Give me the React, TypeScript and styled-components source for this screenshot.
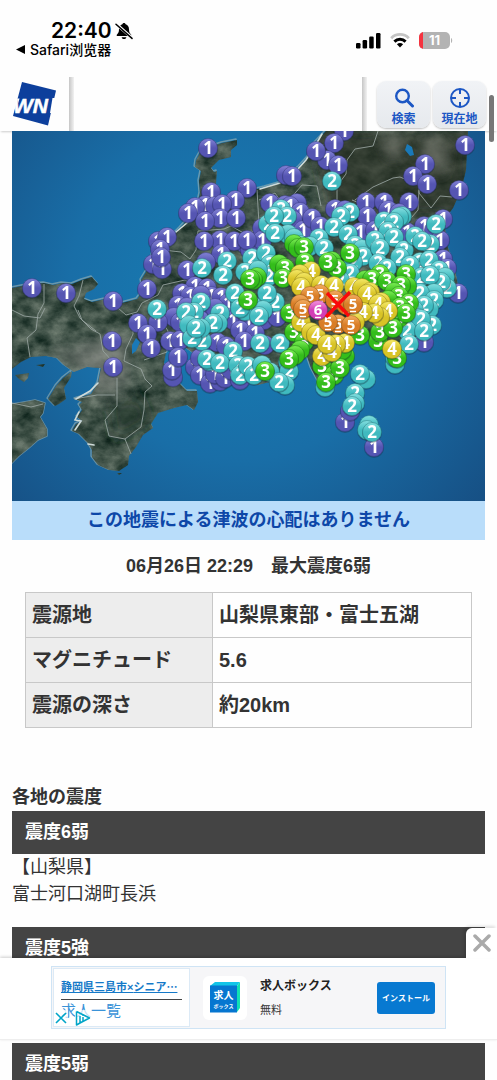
import React from 'react';
import styled, { createGlobalStyle } from 'styled-components';

const GlobalStyle = createGlobalStyle`
  * { box-sizing: border-box; }
  body {
    margin: 0;
    background: #fefefe;
    color: #333;
    font-family: "Liberation Sans", "Noto Sans CJK JP", sans-serif;
  }
  h1, h2, h3, p { margin: 0; }
`;

const Screen = styled.div`
  position: relative;
  height: 100vh;
  overflow: hidden;
`;

/* ---------- status bar ---------- */

const StatusBar = styled.div`
  display: flex;
  justify-content: space-between;
  height: 77px;
  padding: 19px 44px 0 16px;
  color: #000;
  font-family: Inter, "Noto Sans CJK SC", sans-serif;
`;

const Clock = styled.div`
  display: flex;
  align-items: center;
  gap: 3px;
  height: 23px;
  padding-left: 35px;
  font-size: 21px;
  font-weight: 600;
`;

const BackLink = styled.a`
  display: flex;
  align-items: center;
  gap: 5px;
  height: 14px;
  color: #000;
  font-size: 14px;
  font-weight: 500;
  text-decoration: none;
`;

const StatusIcons = styled.div`
  display: flex;
  align-items: center;
  gap: 9px;
  height: 43px;
`;

/* ---------- header ---------- */

const Header = styled.header`
  display: flex;
  height: 54px;
  box-shadow: 0 2px 2px -1px rgba(0, 0, 0, 0.2);
`;

const LogoLink = styled.a`
  display: flex;
  padding: 4px 12px 0;
`;

const Divider = styled.div`
  width: 5px;
  background: linear-gradient(90deg, #c6c6c6, #f2f2f2);
`;

const TitleArea = styled.div`
  flex: 1;
`;

const Tools = styled.div`
  display: flex;
  gap: 3px;
  padding: 4px 11px 2px 10px;
`;

const ToolButton = styled.button`
  display: flex;
  flex-direction: column;
  align-items: center;
  justify-content: space-between;
  width: 53px;
  height: 47px;
  padding: 7px 0 2px;
  border: 0;
  border-radius: 9px;
  background: linear-gradient(#f1f3f6, #e6e9ed);
  box-shadow: 0 1px 2px rgba(0, 0, 0, 0.25);
  color: #1c57c4;
  font: bold 12px/16px "Noto Sans CJK JP", sans-serif;
`;

const ScrollThumb = styled.div`
  position: absolute;
  top: 95px;
  right: 3px;
  width: 5px;
  height: 47px;
  border-radius: 3px;
  background: #777;
`;

/* ---------- report ---------- */

const Report = styled.main`
  padding: 0 12px;
`;

const MapImage = styled.svg`
  position: relative;
  display: block;
  width: 100%;
`;

const Notice = styled.p`
  background: #b9ddfa;
  color: #0d47a8;
  font-size: 18px;
  font-weight: bold;
  line-height: 39px;
  text-align: center;
`;

const Summary = styled.h1`
  font-size: 18px;
  line-height: 52px;
  text-align: center;
`;

const DetailWrap = styled.div`
  padding: 0 13px;
`;

const Details = styled.table`
  width: 100%;
  table-layout: fixed;
  border-collapse: collapse;
  font-size: 20px;
  font-weight: bold;
  line-height: 28px;

  th, td {
    height: 45px;
    padding: 0 6px;
    border: 1px solid #c8c8c8;
    text-align: left;
  }
  th {
    width: 187px;
    background: #ededed;
  }
`;

const AreaTitle = styled.h2`
  padding-top: 55px;
  font-size: 18px;
  line-height: 28px;
`;

const LevelTitle = styled.h3`
  padding: 0 13px 1px;
  background: #444;
  color: #fff;
  font-size: 18px;
  line-height: 42px;
`;

const LevelBody = styled.div`
  min-height: 73px;
  font-size: 18px;
  line-height: 27px;
`;

/* ---------- advertisement ---------- */

const AdBar = styled.aside`
  position: fixed;
  right: 0;
  bottom: 40px;
  left: 0;
  display: flex;
  justify-content: center;
  padding: 8px 0 10px;
  border-bottom: 1px solid #eee;
  background: #fff;
  box-shadow: 0 -1px 3px rgba(0, 0, 0, 0.2);
`;

const AdClose = styled.button`
  position: absolute;
  right: 0;
  bottom: 100%;
  width: 31px;
  height: 30px;
  padding: 2px 0 0;
  border: 0;
  border-radius: 6px 0 0 0;
  background: #fff;
  box-shadow: -2px -2px 3px rgba(0, 0, 0, 0.12);
`;

const Banner = styled.div`
  display: flex;
  align-items: center;
  width: 395px;
  height: 63px;
  padding: 1px;
  border: 1px solid #cfe4f5;
  background: #f6f6f8;
`;

const AdLinks = styled.div`
  position: relative;
  width: 137px;
  height: 59px;
  padding: 9px 7px 0;
  border: 1px solid #dceaf6;
  background: #fff;
`;

const AdHeadline = styled.a`
  display: block;
  height: 22px;
  border-bottom: 1px solid #444;
  color: #1579c8;
  font-size: 11px;
  font-weight: bold;
  line-height: 16px;
  white-space: nowrap;
  font-family: "Noto Sans CJK JP", sans-serif;
`;

const Cross = styled.span`
  font-family: "Liberation Sans", sans-serif;
`;

const AdSubLink = styled.a`
  color: #3a93d8;
  font-size: 15px;
  line-height: 22px;
  text-decoration: none;
`;

const AdMarks = styled.div`
  position: absolute;
  bottom: 0;
  left: 0;
  display: flex;
  gap: 7px;
`;

const MarkIcon = styled.svg`
  display: block;
  background: rgba(255, 255, 255, 0.7);
`;

const AppIcon = styled.div`
  display: flex;
  align-items: center;
  justify-content: center;
  width: 44px;
  height: 44px;
  margin-left: 13px;
  border-radius: 6px;
  background: #fff;
`;

const AppText = styled.div`
  flex: 1;
  padding-left: 13px;
  font-size: 11px;
  line-height: 24px;
`;

const AppName = styled.div`
  color: #222;
  font-size: 12px;
  font-weight: bold;
`;

const InstallButton = styled.button`
  width: 58px;
  height: 32px;
  margin-right: 9px;
  padding: 0;
  border: 0;
  border-radius: 3px;
  background: #0879d1;
  color: #fff;
  font: bold 8px "Noto Sans CJK JP", sans-serif;
`;

/* ---------- map data ---------- */

type Point = [number, number];
type Level = 1 | 2 | 3 | 4 | 5 | 6;

const tints: Record<Level, [string, string, string]> = {
  1: ['#8383d6', '#5555b2', '#37377f'],
  2: ['#84dfe0', '#40babf', '#23797f'],
  3: ['#7cee55', '#34bd1b', '#1c7a10'],
  4: ['#f5e968', '#d8c326', '#8f7e14'],
  5: ['#f3ad62', '#d97d26', '#91500f'],
  6: ['#f495e0', '#d33fb6', '#862274'],
};

const stations: [Level, Point[]][] = [
  [1, [
    [344, 131], [334, 143], [327, 160], [316, 151], [338, 165], [286, 175], [292, 176], [465, 145], [425, 164],
    [413, 176], [427, 184], [459, 190], [208, 148], [211, 192], [247, 188], [235, 200], [205, 205], [195, 207],
    [215, 206], [222, 204], [188, 213], [220, 218], [205, 221], [236, 218], [158, 241], [167, 237], [160, 249],
    [153, 264], [162, 269], [161, 257], [220, 240], [244, 243], [204, 241], [234, 241], [250, 250], [221, 254],
    [206, 262], [187, 270], [32, 288], [66, 293], [113, 301], [147, 289], [270, 203], [285, 205], [297, 203],
    [290, 206], [300, 212], [293, 220], [303, 230], [262, 228], [262, 240], [247, 240], [312, 218], [320, 226],
    [335, 209], [345, 210], [366, 202], [384, 202], [409, 202], [367, 216], [360, 232], [375, 230], [388, 210],
    [399, 213], [407, 232], [424, 226], [434, 230], [443, 219], [440, 240], [443, 259], [458, 293], [447, 268],
    [195, 286], [207, 288], [182, 293], [190, 296], [211, 296], [201, 295], [221, 297], [228, 303], [178, 305],
    [187, 307], [200, 307], [215, 308], [174, 317], [180, 322], [200, 320], [226, 317], [233, 320], [248, 322],
    [252, 305], [264, 320], [277, 317], [240, 330], [255, 333], [170, 341], [180, 340], [205, 343], [217, 342],
    [226, 346], [244, 341], [265, 345], [173, 377], [172, 370], [178, 357], [195, 367], [200, 358], [200, 375],
    [210, 383], [220, 381], [215, 374], [225, 378], [231, 370], [240, 380], [158, 322], [138, 323], [147, 334],
    [151, 348], [112, 341], [113, 367], [424, 342], [345, 422], [350, 411], [374, 447],
  ]],
  [2, [
    [332, 181], [281, 209], [287, 216], [268, 224], [274, 216], [288, 234], [275, 233], [294, 238], [300, 245],
    [350, 212], [341, 216], [334, 227], [348, 234], [319, 238], [310, 246], [324, 248], [355, 245],
    [362, 249], [363, 256], [353, 262], [384, 221], [402, 216], [399, 217], [394, 222], [388, 231],
    [394, 237], [375, 240], [380, 248], [404, 250], [400, 257], [415, 236], [430, 244], [422, 241], [436, 224],
    [420, 262], [429, 260], [378, 263], [387, 268], [410, 265], [439, 270], [421, 277], [445, 277], [447, 288],
    [441, 282], [430, 275], [434, 293], [420, 293], [434, 300], [429, 309], [424, 305], [414, 310], [350, 273],
    [340, 280], [227, 261], [202, 268], [252, 258], [266, 253], [245, 272], [223, 275], [270, 264], [269, 276],
    [258, 270], [240, 303], [245, 311], [235, 293], [240, 308], [265, 305], [275, 302], [267, 293], [263, 310],
    [259, 316], [157, 309], [220, 313], [218, 323], [213, 323], [201, 302], [194, 312], [186, 312], [202, 341],
    [189, 325], [201, 328], [192, 338], [196, 328], [233, 351], [209, 361], [207, 359], [220, 363], [238, 365],
    [240, 375], [248, 366], [254, 375], [262, 365], [270, 372], [260, 343], [280, 343], [288, 362], [289, 371],
    [285, 385], [279, 382], [325, 387], [395, 364], [395, 357], [418, 318], [432, 325], [421, 319], [407, 330],
    [424, 331], [409, 344], [366, 379], [360, 374], [355, 393], [355, 403], [352, 406], [369, 425], [367, 430],
    [372, 432],
  ]],
  [3, [
    [294, 244], [298, 248], [304, 247], [305, 262], [279, 264], [285, 268], [283, 278], [332, 261], [337, 268],
    [328, 262], [350, 253], [257, 277], [253, 280], [250, 279], [248, 300], [365, 280], [380, 274], [372, 279],
    [387, 281], [406, 274], [407, 286], [401, 285], [394, 292], [399, 296], [388, 300], [409, 303], [400, 307],
    [290, 313], [294, 332], [378, 341], [380, 332], [399, 318], [406, 313], [393, 328], [397, 358], [304, 342],
    [300, 350], [295, 355], [289, 359], [265, 371], [322, 366], [345, 356], [342, 350], [334, 375], [340, 368],
    [326, 382], [360, 335],
  ]],
  [4, [
    [311, 271], [300, 274], [297, 279], [304, 282], [301, 287], [321, 285], [334, 286], [354, 287], [362, 288],
    [370, 292], [367, 294], [381, 302], [378, 304], [388, 311], [380, 317], [374, 313], [363, 312], [301, 322],
    [311, 332], [316, 335], [345, 343], [336, 344], [322, 356], [332, 352], [327, 344], [355, 322], [392, 349],
  ]],
  [5, [[320, 294], [310, 296], [300, 304], [303, 309], [335, 300], [346, 305], [353, 304], [338, 324], [328, 322], [351, 325]]],
  [6, [[318, 310]]],
];

const pins = stations.flatMap(([level, points]) => points.map(([x, y]) => ({ level, x, y })));

/* A pin that lies almost wholly under a later one shows no digit. */
const isBuried = (index: number) =>
  pins.slice(index + 1).some((p) => Math.hypot(p.x - pins[index].x, p.y - pins[index].y) < 8);

const mainland =
  'M12 288 L22 286 32 284 44 283 53 285 62 283 72 284 82 280 92 277 98 284 94 289 86 293 84 299 92 302 105 299 122 303 137 299 143 291 141 280 149 267 153 251 171 237 180 228 190 217 197 207 200 193 199 181 201 171 195 167 196 160 201 151 210 147 222 143 227 142 237 140 237 145 231 150 231 157 219 160 211 168 214 172 217 171 216 183 216 192 224 198 240 198 253 190 265 187 279 183 291 173 299 167 308 157 315 143 326 131 468 131 467 148 466 170 461 190 453 208 444 220 447 244 455 270 459 290 448 286 435 298 425 320 409 350 396 367 388 349 382 338 360 337 350 350 341 378 322 389 311 368 304 347 285 378 258 385 228 378 208 369 196 355 182 345 173 335 167 347 164 363 168 374 179 383 187 391 197 391 198 402 194 410 187 405 174 408 158 413 151 424 153 428 143 435 136 447 129 456 128 465 119 471 109 470 98 465 92 457 92 450 88 443 79 434 72 431 76 424 82 421 77 417 82 410 79 405 82 402 75 399 91 394 98 383 101 368 87 367 74 372 64 365 57 358 46 356 31 357 21 362 12 369 Z';
const shikoku = 'M12 404 L24 402 35 400 45 403 43 413 40 417 47 429 47 436 38 440 29 448 19 456 12 463 Z';
const awaji = 'M72 371 L71 377 64 388 66 399 59 404 55 406 48 399 56 386 63 378 Z';
const islets = 'M15 375 L29 373 28 378 24 382 19 379 Z M36 365 l9 -1 -2 3 z M208 178 l8 -5 -1 9 -7 0 z M117 473 l5 0 -3 2 z';
const lakes = 'M136 338 l4 4 -4 9 -4 3 0 -9 z M407 144 l5 3 2 8 -4 1 -5 -6 z';
const borders =
  'M44 284 L44 303 38 314 36 330 27 338 30 357 M12 310 L24 316 40 318 45 308 M83 280 L79 296 74 306 80 318 91 329 100 334 103 351 113 362 120 373 M78 310 L82 320 96 331 M118 308 L126 315 137 312 142 303 158 295 163 285 185 280 198 287 M133 314 L133 334 126 349 124 361 141 369 145 379 152 386 145 392 144 410 141 427 125 439 131 454 M117 378 L117 406 105 420 109 436 125 439 M74 399 L97 395 115 395 M155 310 L168 331 167 352 144 360 M163 250 L181 252 190 259 196 250 198 231 224 229 231 226 249 236 259 224 257 190 M218 232 L216 244 M259 200 L275 193 284 206 302 185 317 186 321 206 M337 208 L337 186 346 174 347 160 355 149 373 146 378 131 M355 200 L373 187 393 178 400 177 419 185 419 193 431 208 440 196 452 197 M352 200 L369 207 385 222 405 225 418 210 419 190 M12 403 L31 407 43 404';

function Pin({ level, x, y, labelled }: { level: Level; x: number; y: number; labelled: boolean }) {
  const weak = level > 4;
  return (
    <g>
      <circle cx={x} cy={y + 1} r="10" fill="#1b2c3c" opacity="0.35" />
      <circle cx={x} cy={y} r="9.5" fill={`url(#tint${level})`} stroke={tints[level][2]} strokeOpacity="0.6" strokeWidth="0.8" />
      {labelled && <text x={x} y={weak ? y + 5 : y + 6} fontSize={weak ? 15 : 17}>{level}</text>}
      {weak && <path d={`M${x - 3} ${y + 7.5}h6`} stroke="#fff" strokeWidth="1.4" />}
    </g>
  );
}

function IntensityMap() {
  return (
    <MapImage viewBox="12 131 473 370" role="img" aria-label="震度分布図">
      <defs>
        <radialGradient id="sea" gradientUnits="userSpaceOnUse" cx="240" cy="290" r="340">
          <stop offset="0" stopColor="#177fb5" />
          <stop offset="0.5" stopColor="#196ea7" />
          <stop offset="1" stopColor="#164c80" />
        </radialGradient>
        {([1, 2, 3, 4, 5, 6] as Level[]).map((l) => (
          <linearGradient key={l} id={`tint${l}`} x1="0" y1="0" x2="0" y2="1">
            <stop offset="0" stopColor={tints[l][0]} />
            <stop offset="0.5" stopColor={tints[l][1]} />
            <stop offset="1" stopColor={tints[l][1]} />
          </linearGradient>
        ))}
        <filter id="terrain" x="0" y="0" width="100%" height="100%" colorInterpolationFilters="sRGB">
          <feTurbulence type="fractalNoise" baseFrequency="0.06 0.08" numOctaves="5" seed="7" />
          <feColorMatrix values="0.5 0 0 0 0  0.46 0 0 0 0.09  0.44 0 0 0 0.06  0 0 0 0 1" />
          <feComposite in2="SourceGraphic" operator="in" />
        </filter>
        <filter id="soft"><feGaussianBlur stdDeviation="7" /></filter>
        <clipPath id="land"><path d={mainland} /></clipPath>
      </defs>
      <rect x="12" y="131" width="473" height="370" fill="url(#sea)" />
      <g fill="none" stroke="#9fb4b2" strokeWidth="1.4" strokeLinejoin="round" opacity="0.6">
        <path d={mainland} transform="translate(-1 -1)" />
        <path d={shikoku} />
        <path d={awaji} transform="translate(-1 -1)" />
      </g>
      <path d={`${mainland} ${shikoku} ${awaji} ${islets}`} fill="#37504c" filter="url(#terrain)" />
      <g clipPath="url(#land)">
        <g filter="url(#soft)">
          <path d="M50 345 L70 350 90 340 128 335 128 385 100 400 85 370 60 362 Z" fill="#8d8f8b" opacity="0.6" />
          <path d="M310 131 H470 V215 H330 Z" fill="#2a2e26" opacity="0.65" />
          <path d="M386 131 L400 140 395 158 388 150 Z M425 131 L445 150 440 175 430 160 Z" fill="#8a8c82" opacity="0.7" />
          <path d="M110 405 L140 395 150 420 115 440 Z" fill="#22332a" opacity="0.6" />
        </g>
      </g>
      <path d={borders} fill="none" stroke="#9aa6a2" strokeWidth="1" strokeLinejoin="round" opacity="0.85" />
      <path d={lakes} fill="#1a79b8" />
      <path d="M297 170 L306 160 315 146 322 134 M260 189 L280 183 M176 232 L188 222 197 208 M79 412 l-4 8 6 1 -6 9 M88 444 l6 1 M98 383 l-8 8 -14 8" fill="none" stroke="#cfdbd9" strokeWidth="1.6" strokeLinecap="round" />
      <g fill="#fff" fontFamily='"Open Sans", "Noto Sans", sans-serif' fontWeight="bold" textAnchor="middle">
        {pins.map((pin, i) => <Pin key={i} {...pin} labelled={!isBuried(i)} />)}
      </g>
      <path d="M327 293 L349 316 M350 292 L326 317" stroke="#fa0a0a" strokeWidth="3.4" />
    </MapImage>
  );
}

/* ---------- icons ---------- */

const BellOff = () => (
  <svg width="18" height="18" viewBox="0 0 18 18">
    <path d="M9 1c.9 0 1.5.6 1.6 1.300C13 3 14 5 14 7.300c0 3 .8 4 2 5.200.7.800.3 1.500-.6 1.500H2.600c-.9 0-1.300-.7-.6-1.500C3.200 11.300 4 10.300 4 7.300 4 5 5 3 7.400 2.300 7.500 1.600 8.100 1 9 1z M6.600 15.200h4.800C11 16.500 10.200 17 9 17s-2-.5-2.400-1.800z" fill="#000" />
    <path d="M1 1.800L17.500 16.200" stroke="#fefefe" strokeWidth="3" />
    <path d="M1 2.200L17 16.400" stroke="#000" strokeWidth="1.5" strokeLinecap="round" />
  </svg>
);

const Signal = () => (
  <svg width="25" height="17" viewBox="0 0 25 17">
    <rect x="0" y="11" width="4.500" height="5.500" rx="1.200" />
    <rect x="6.600" y="8" width="4.500" height="8.500" rx="1.200" />
    <rect x="13.200" y="4.500" width="4.500" height="12" rx="1.200" />
    <rect x="20" y="1" width="4.500" height="15.500" rx="1.200" />
  </svg>
);

const Wifi = () => (
  <svg width="20" height="17" viewBox="0 0 20 17" fill="none">
    <path d="M1.200 6.200C6 1.200 14 1.200 18.800 6.200" stroke="#c4c4c4" strokeWidth="2.800" />
    <path d="M4.400 9.600C7.500 6.500 12.500 6.500 15.600 9.600" stroke="#000" strokeWidth="2.900" />
    <path d="M6.900 12.200C8.700 10.700 11.300 10.700 13.100 12.200L10 15.500z" fill="#000" />
  </svg>
);

const Battery = () => (
  <svg width="34" height="17" viewBox="0 0 34 17" role="img" aria-label="11%">
    <defs><clipPath id="cell"><rect width="31" height="17" rx="5" /></clipPath></defs>
    <g clipPath="url(#cell)">
      <rect width="31" height="17" fill="#b3b3b3" />
      <rect width="4" height="17" fill="#f5333f" />
    </g>
    <path d="M32 6c1.600.6 1.600 4.400 0 5z" fill="#b3b3b3" />
    <text x="15.500" y="13" fill="#fff" fontSize="13" fontWeight="700" textAnchor="middle">11</text>
  </svg>
);

const Logo = () => (
  <svg width="45" height="46" viewBox="12 81 45 46" role="img" aria-label="WN">
    <path d="M22 82L56 90.500 48 125.500 13 116z" fill="#0d3f9c" />
    <path d="M17.500 98.500h2l-1.500 5z" fill="#fff" />
    <text x="13" y="113" fill="#fff" stroke="#fff" strokeWidth="0.500" fontFamily='"Liberation Sans", sans-serif' fontSize="21" fontWeight="bold" fontStyle="italic">WN</text>
    <path d="M52.500 98H56l-3.500 15h-2.500z" fill="#fff" />
  </svg>
);

const SearchIcon = () => (
  <svg width="22" height="20" viewBox="0 0 22 20" fill="none" stroke="#1c57c4">
    <circle cx="9.500" cy="8" r="6.300" strokeWidth="2.400" />
    <path d="M14 12.500L19.500 18" strokeWidth="3" strokeLinecap="round" />
  </svg>
);

const LocateIcon = () => (
  <svg width="22" height="20" viewBox="0 0 22 20" fill="none" stroke="#1c57c4" strokeWidth="2">
    <circle cx="11" cy="10" r="9" />
    <path d="M11 1v5M11 14v5M2 10h5M15 10h5" />
  </svg>
);

const JobBoxLogo = () => (
  <svg width="30" height="31" viewBox="0 0 30 31">
    <path d="M0 4L5 0H30L27 4z" fill="#12c4e8" />
    <path d="M27 4L30 0V26L27 30z" fill="#10e0b4" />
    <rect y="3.500" width="27" height="27" fill="#0676d0" />
    <g fill="#fff" fontFamily='"Noto Sans CJK JP", sans-serif' fontWeight="bold" textAnchor="middle">
      <text x="13.500" y="17" fontSize="10">求人</text>
      <text x="13.500" y="26" fontSize="5">ボックス</text>
    </g>
  </svg>
);

const details = [
  ['震源地', '山梨県東部・富士五湖'],
  ['マグニチュード', '5.6'],
  ['震源の深さ', '約20km'],
];

export default function App() {
  return (
    <Screen>
      <GlobalStyle />
      <StatusBar>
        <div>
          <Clock>22:40 <BellOff /></Clock>
          <BackLink href="#back">
            <svg width="9" height="9" viewBox="0 0 9 9"><path d="M0 4.500L9 0v9z" /></svg>
            Safari浏览器
          </BackLink>
        </div>
        <StatusIcons><Signal /><Wifi /><Battery /></StatusIcons>
      </StatusBar>

      <Header>
        <LogoLink href="#top"><Logo /></LogoLink>
        <Divider />
        <TitleArea />
        <Divider />
        <Tools>
          <ToolButton type="button"><SearchIcon />検索</ToolButton>
          <ToolButton type="button"><LocateIcon />現在地</ToolButton>
        </Tools>
      </Header>
      <ScrollThumb />

      <Report>
        <IntensityMap />
        <Notice>この地震による津波の心配はありません</Notice>
        <Summary>06月26日 22:29　最大震度6弱</Summary>
        <DetailWrap>
          <Details>
            <tbody>
              {details.map(([name, value]) => (
                <tr key={name}><th scope="row">{name}</th><td>{value}</td></tr>
              ))}
            </tbody>
          </Details>
        </DetailWrap>

        <AreaTitle>各地の震度</AreaTitle>
        <LevelTitle>震度6弱</LevelTitle>
        <LevelBody>
          <p>【山梨県】</p>
          <p>富士河口湖町長浜</p>
        </LevelBody>
        <LevelTitle>震度5強</LevelTitle>
        <LevelBody />
        <LevelTitle>震度5弱</LevelTitle>
      </Report>

      <AdBar>
        <AdClose type="button" aria-label="閉じる">
          <svg width="18" height="18" viewBox="0 0 18 18"><path d="M2 2L16 16M16 2L2 16" stroke="#aaa" strokeWidth="3.500" strokeLinecap="round" /></svg>
        </AdClose>
        <Banner>
          <AdLinks>
            <AdHeadline href="#ad">静岡県三島市<Cross>×</Cross>シニア…</AdHeadline>
            <AdSubLink href="#list">求人一覧</AdSubLink>
            <AdMarks>
              <MarkIcon width="14" height="16" viewBox="0 0 14 16"><path d="M2 3L12 13M12 3L2 13" stroke="#00a5c8" strokeWidth="1.600" /></MarkIcon>
              <MarkIcon width="16" height="16" viewBox="0 0 16 16" fill="none" stroke="#00a5c8" strokeWidth="1.500">
                <path d="M1.500 1.500L14.500 8 5 13V6M1.500 1.500V15L5 13" strokeLinejoin="round" />
                <path d="M8 7v4M8 4.800v1" />
              </MarkIcon>
            </AdMarks>
          </AdLinks>
          <AppIcon><JobBoxLogo /></AppIcon>
          <AppText>
            <AppName>求人ボックス</AppName>
            無料
          </AppText>
          <InstallButton type="button">インストール</InstallButton>
        </Banner>
      </AdBar>
    </Screen>
  );
}
